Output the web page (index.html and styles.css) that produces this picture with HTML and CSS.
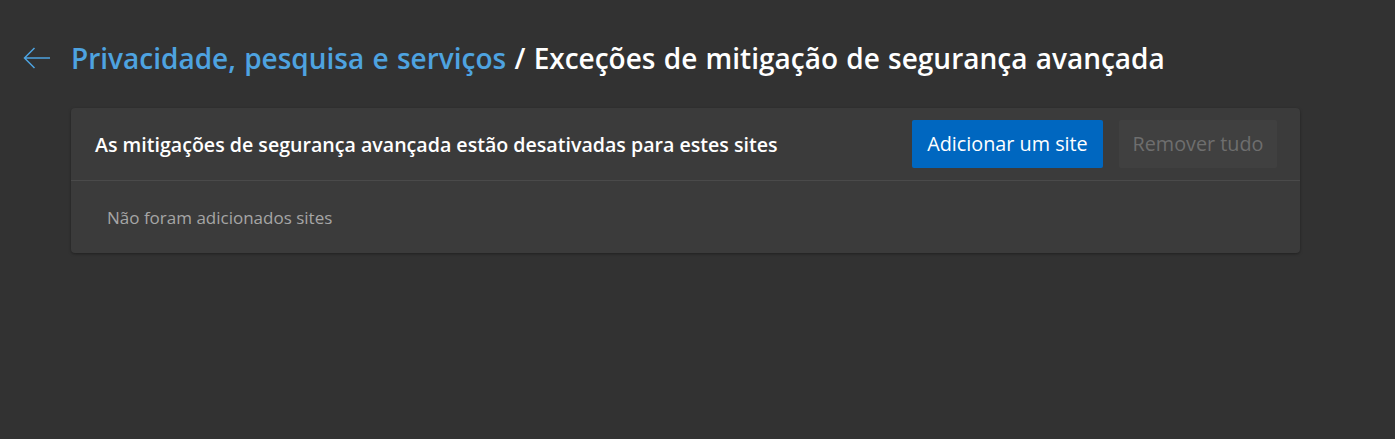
FILE: index.html
```html
<!DOCTYPE html>
<html lang="pt">
<head>
<meta charset="utf-8">
<link rel="stylesheet" href="styles.css">
</head>
<body>
<div class="page">
  <header class="header">
    <button class="back" aria-label="Voltar">
      <svg width="28" height="22" viewBox="0 0 28 22"><path d="M11.5 1 L1.5 11 L11.5 21 M1.5 11 H27" fill="none" stroke="#4ea3e0" stroke-width="1.5"/></svg>
    </button>
    <h1 class="title"><a class="crumb" href="#">Privacidade, pesquisa e serviços</a> / Exceções de mitigação de segurança avançada</h1>
  </header>
  <section class="card">
    <div class="card-head">
      <h2 class="card-title">As mitigações de segurança avançada estão desativadas para estes sites</h2>
      <div class="actions">
        <button class="btn primary">Adicionar um site</button>
        <button class="btn disabled">Remover tudo</button>
      </div>
    </div>
    <div class="card-body">
      <p class="empty">Não foram adicionados sites</p>
    </div>
  </section>
</div>
</body>
</html>
```
FILE: styles.css
```css
* { box-sizing: border-box; }
html, body { margin: 0; height: 100%; }
body {
  background: #323232;
  font-family: "Open Sans", "Noto Sans", sans-serif;
  color: #fff;
}
.page { padding: 37px 95px 0 23px; }
.header { display: flex; align-items: center; gap: 20px; height: 42px; }
.back {
  background: none; border: 0; padding: 0; width: 28px; height: 22px;
  display: flex; align-items: center; justify-content: center; cursor: pointer;
}
.title {
  margin: 0; font-size: 28px; font-weight: 600; color: #fff; line-height: 42px;
  white-space: nowrap; word-spacing: 1px;
}
.crumb { color: #4ea3e0; text-decoration: none; }
.card {
  margin: 29px 0 0 48px;
  background: #3b3b3b;
  border-radius: 4px;
  box-shadow: 0 1px 3px rgba(0,0,0,0.35);
}
.card-head {
  display: flex; align-items: center; justify-content: space-between;
  padding: 12px 23px 12px 24px;
  border-bottom: 1px solid #4a4a4a;
}
.card-title { margin: 0; font-size: 19.6px; font-weight: 600; white-space: nowrap; }
.actions { display: flex; gap: 16px; }
.btn {
  font-family: inherit; font-size: 19.8px; border: 0; border-radius: 2px;
  height: 48px; padding: 0; line-height: 48px;
}
.primary { background: #0067c0; color: #fff; width: 191px; }
.disabled { background: #404040; color: #6e6e6e; width: 158px; }
.card-body { padding: 25px 36px 23px; }
.empty { margin: 0; font-size: 17px; color: #a6a6a6; line-height: 24px; }
```
